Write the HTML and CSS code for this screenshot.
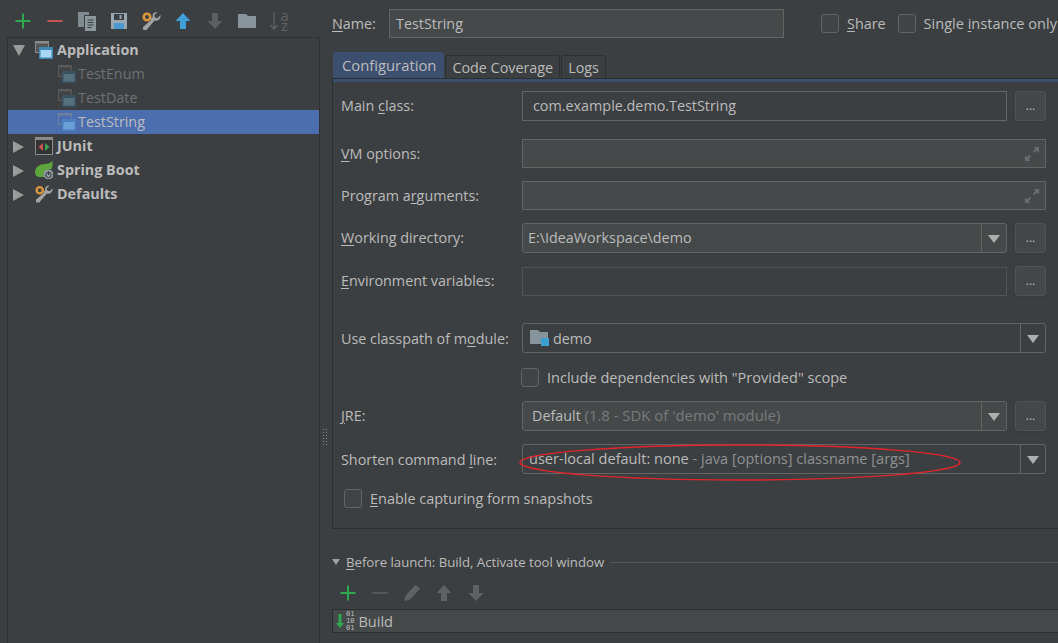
FILE: index.html
```html
<!DOCTYPE html>
<html lang="en">
<head>
<meta charset="utf-8">
<title>Run/Debug Configurations</title>
<link rel="stylesheet" href="styles.css">
</head>
<body>
<div class="app">
  <aside class="left">
    <div class="toolbar">
      <span class="tool"><svg width="18" height="18" viewBox="0 0 18 18"><path d="M9 1.500v15M1.500 9h15" stroke="#2fa84f" stroke-width="2"/></svg></span>
      <span class="tool"><svg width="18" height="18" viewBox="0 0 18 18"><path d="M1.500 9h15" stroke="#c75450" stroke-width="2"/></svg></span>
      <span class="tool"><svg width="18" height="20" viewBox="0 0 18 20"><path d="M0 1h11v3H6v12H0z" fill="#7f8b91"/><path d="M7 5h11v15H7z" fill="#8b979d"/><path d="M9.500 9h6M9.500 11.500h6M9.500 14h6M9.500 16.500h4" stroke="#3c3f41"/></svg></span>
      <span class="tool"><svg width="16" height="16" viewBox="0 0 16 16"><path d="M0 0h16v16H0z" fill="#9aa7b0"/><path d="M3 1h10v6H3z" fill="#3c3f41"/><path d="M8.500 2h2v4h-2z" fill="#9aa7b0"/><path d="M3 10h10v6H3z" fill="#4a9ad4"/></svg></span>
      <span class="tool"><svg width="19" height="19" viewBox="0 0 19 19"><use href="#wrench"/></svg></span>
      <span class="tool"><svg width="16" height="16" viewBox="0 0 16 16"><path d="M8 0l7.500 8H11v8H5V8H.5z" fill="#3f9fd8"/></svg></span>
      <span class="tool"><svg width="16" height="16" viewBox="0 0 16 16"><path d="M8 16L.5 8H5V0h6v8h4.500z" fill="#5c5f61"/></svg></span>
      <span class="tool"><svg width="18" height="14" viewBox="0 0 18 14"><path d="M0 0h8l2 2h8v12H0z" fill="#87949c"/></svg></span>
      <span class="tool sort"><svg width="8" height="18" viewBox="0 0 8 18"><path d="M4 0v17M.5 13L4 17l3.500-4" fill="none" stroke="#5f6264" stroke-width="1.200"/></svg><span class="sort-letters">a z</span></span>
    </div>
    <div class="tree">
      <div class="tree-row"><span class="arrow-down"></span><span class="node-icon"><svg width="18" height="18" viewBox="0 0 18 18"><use href="#win-bright"/></svg></span><b>Application</b></div>
      <div class="tree-row child dim"><span class="node-icon"><svg width="18" height="18" viewBox="0 0 18 18"><use href="#win-dim"/></svg></span>TestEnum</div>
      <div class="tree-row child dim"><span class="node-icon"><svg width="18" height="18" viewBox="0 0 18 18"><use href="#win-dim"/></svg></span>TestDate</div>
      <div class="tree-row child selected"><span class="node-icon"><svg width="18" height="18" viewBox="0 0 18 18"><use href="#win-sel"/></svg></span>TestString</div>
      <div class="tree-row"><span class="arrow-right"></span><span class="node-icon"><svg width="18" height="18" viewBox="0 0 18 18"><path d="M0 0h18v18H0z" fill="#8a8a8a"/><path d="M1 3h16v14H1z" fill="#333"/><path d="M8 6v8L3.500 10z" fill="#c75450"/><path d="M10 6v8l4.500-4z" fill="#3da356"/></svg></span><b>JUnit</b></div>
      <div class="tree-row"><span class="arrow-right"></span><span class="node-icon"><svg width="18" height="18" viewBox="0 0 18 18"><path d="M17.500 0c.5 4-.2 7-1.500 8.500a6 6 0 0 0-7 7.500H5C2 16 0 14 0 11c0-5 5-8 10-8 3 0 5.500-1 7.500-3z" fill="#5fa53d"/><circle cx="13.500" cy="13.500" r="5" fill="#8e9aa1"/><circle cx="13.500" cy="14" r="2.700" fill="none" stroke="#2f3234"/><path d="M13.500 10.500v3.500" stroke="#2f3234"/></svg></span><b>Spring Boot</b></div>
      <div class="tree-row"><span class="arrow-right"></span><span class="node-icon"><svg width="19" height="19" viewBox="0 0 19 19"><use href="#wrench"/></svg></span><b>Defaults</b></div>
    </div>
  </aside>

  <div class="splitter"><span class="grip"></span></div>

  <main class="right">
    <div class="name-row">
      <label class="name-label"><u>N</u>ame:</label>
      <div class="field filled name-field">TestString</div>
      <span class="check"></span><span class="check-text"><u>S</u>hare</span>
      <span class="check"></span><span class="check-text long">Single <u>i</u>nstance only</span>
    </div>

    <div class="tabs">
      <span class="tab active">Configuration</span>
      <span class="tab">Code Coverage</span>
      <span class="tab">Logs</span>
    </div>

    <section class="panel">
      <div class="row r-main"><label>Main <u>c</u>lass:</label><div class="field">com.example.demo.TestString</div><span class="more">...</span></div>
      <div class="row r-vm"><label><u>V</u>M options:</label><div class="field filled wide"><svg class="expand" width="16" height="16" viewBox="0 0 16 16"><use href="#expand"/></svg></div></div>
      <div class="row r-args"><label>Program a<u>r</u>guments:</label><div class="field filled wide"><svg class="expand" width="16" height="16" viewBox="0 0 16 16"><use href="#expand"/></svg></div></div>
      <div class="row r-dir"><label><u>W</u>orking directory:</label><div class="field filled combo"><span class="value">E:\IdeaWorkspace\demo</span><span class="drop"></span></div><span class="more">...</span></div>
      <div class="row r-env"><label><u>E</u>nvironment variables:</label><div class="field dim-border"></div><span class="more">...</span></div>
      <div class="row r-cp"><label>Use classpath of m<u>o</u>dule:</label><div class="field combo wide"><span class="value module"><svg width="19" height="18" viewBox="0 0 19 18"><path d="M0 1h8l2 2h8v12H0z" fill="#87949c"/><path d="M11 9h8v8h-8z" fill="#3b9fd1"/></svg>demo</span><span class="drop"></span></div></div>
      <div class="row r-inc"><span></span><div class="check-line"><span class="check"></span><span class="check-text long">Include dependencies with "Provided" scope</span></div></div>
      <div class="row r-jre"><label><u>J</u>RE:</label><div class="field filled combo"><span class="value jre">Default <span class="muted">(1.8 - SDK of 'demo' module)</span></span><span class="drop"></span></div><span class="more">...</span></div>
      <div class="row r-short"><label>Shorten command <u>l</u>ine:</label><div class="field combo wide"><span class="value short long">user-local default: none <span class="soft">- java [options] classname [args]</span></span><span class="drop"></span></div></div>
      <div class="check-line r-snap"><span class="check"></span><span class="check-text"><u>E</u>nable capturing form snapshots</span></div>
    </section>

    <div class="before-head"><span class="tri-small"></span><span class="before-title"><u>B</u>efore launch: Build, Activate tool window</span><span class="before-rule"></span></div>
    <div class="toolbar before-tools">
      <span class="tool"><svg width="18" height="18" viewBox="0 0 18 18"><path d="M9 1.500v15M1.500 9h15" stroke="#2fa84f" stroke-width="2"/></svg></span>
      <span class="tool"><svg width="18" height="18" viewBox="0 0 18 18"><path d="M1.500 9h15" stroke="#555" stroke-width="2"/></svg></span>
      <span class="tool"><svg width="16" height="16" viewBox="0 0 16 16"><path d="M11.500 0L16 3.500 6 14.500 0 16l2-6z" fill="#5f6264"/></svg></span>
      <span class="tool"><svg width="16" height="16" viewBox="0 0 16 16"><path d="M8 0l7.500 8H11v8H5V8H.5z" fill="#5f6264"/></svg></span>
      <span class="tool"><svg width="16" height="16" viewBox="0 0 16 16"><path d="M8 16L.5 8H5V0h6v8h4.500z" fill="#5f6264"/></svg></span>
    </div>
    <div class="build-list">
      <svg width="8" height="14" viewBox="0 0 8 14"><path d="M4 14L0 9h2.500V0h3v9H8z" fill="#2fa84f"/></svg>
      <span class="bits">01<br>10<br>01</span>
      <span class="build-text long">Build</span>
    </div>
  </main>

  <svg class="annotation" width="446" height="40" viewBox="0 0 446 40"><ellipse cx="221" cy="18.500" rx="220" ry="17.500" fill="none" stroke="#e0262c" stroke-width="1.500"/></svg>
</div>

<svg class="defs" width="0" height="0">
  <defs>
    <g id="win-bright"><path d="M0 0h14v12H0z" fill="#8a8a8a"/><path d="M1 2.500h12V11H1z" fill="#555"/><path d="M4 6h14v12H4z" fill="#3f87b5"/><path d="M5.500 9h11v7.500h-11z" fill="#a9d6f2"/></g>
    <g id="win-dim"><path d="M0 0h14v12H0z" fill="#5a5a5a"/><path d="M1 2.500h12V11H1z" fill="#444"/><path d="M4 6h14v12H4z" fill="#3a515f"/><path d="M5.500 9h11v7.500h-11z" fill="#55707f"/></g>
    <g id="win-sel"><path d="M0 0h14v12H0z" fill="#6f7f9f"/><path d="M1 2.500h12V11H1z" fill="#4b6eaf"/><path d="M4 6h14v12H4z" fill="#4c7fbf"/><path d="M5.500 9h11v7.500h-11z" fill="#6a9fd8"/></g>
    <g id="expand"><path d="M9.500 1H15v5.500l-2-2-2.500 2.500-1.500-1.500L11.500 3zM6.500 15H1V9.500l2 2L5.500 9 7 10.500 4.500 13z" fill="#6a6d6f"/></g>
    <g id="wrench"><path d="M18.500 3l-3 3.200-2.500-.8-.7-2.500L15.300.5c-3-.8-5.300 1.500-4.500 4.500l-1.600 1.600-.3 1.700L1 15l.2 3h3.200l8.200-9.500c3.300 1 6.500-1.500 5.900-5.500z" fill="#a3a3a3"/><circle cx="5" cy="5" r="3.300" fill="none" stroke="#d9963a" stroke-width="2.600"/></g>
  </defs>
</svg>
</body>
</html>
```

FILE: styles.css
```css
* { box-sizing: border-box; }
html, body { margin: 0; padding: 0; }
body {
  background: #3c3f41;
  color: #bbbbbb;
  font-family: "Open Sans", "Noto Sans", sans-serif;
  font-size: 14.35px;
  overflow: hidden;
}
u { text-underline-offset: 2px; }
.long { font-size: 14.55px; }
.defs { position: absolute; }
.app {
  position: relative;
  display: flex;
  width: 1058px;
  height: 643px;
  overflow: hidden;
}
.left {
  flex: 0 0 320px;
  display: flex;
  flex-direction: column;
  padding-left: 7px;
}
.toolbar { display: flex; align-items: center; }
.left .toolbar { height: 37px; padding-top: 5px; }
.tool {
  flex: 0 0 32px;
  display: flex;
  justify-content: center;
  align-items: center;
  height: 20px;
}
.sort { gap: 3px; }
.sort-letters {
  width: 8px;
  color: #5f6264;
  font-size: 14.5px;
  line-height: 10px;
  text-align: center;
}
.tree {
  flex: 1;
  border: 1px solid #2f3133;
  border-bottom: 0;
}
.tree-row {
  display: flex;
  align-items: center;
  height: 24px;
  padding-left: 27px;
  padding-bottom: 2px;
  position: relative;
  white-space: nowrap;
}
.tree-row b { color: #bbbbbb; font-weight: 700; margin-left: 4px; }
.tree-row .node-icon { margin-top: 2px; }
.tree-row.child { padding-left: 50px; }
.tree-row.child .node-icon { margin-right: 2px; }
.tree-row.dim { color: #6e7072; }
.tree-row.selected { background: #4b6eaf; color: #bbbbbb; }
.node-icon { display: flex; width: 18px; height: 18px; }
.arrow-down, .arrow-right { position: absolute; width: 0; height: 0; }
.arrow-down {
  left: 5px; top: 7px;
  border-left: 6px solid transparent;
  border-right: 6px solid transparent;
  border-top: 11px solid #9a9a9a;
}
.arrow-right {
  left: 5px; top: 7px;
  border-top: 6px solid transparent;
  border-bottom: 6px solid transparent;
  border-left: 11px solid #9a9a9a;
}
.splitter {
  flex: 0 0 12px;
  padding: 428px 0 0 2px;
}
.grip {
  display: block;
  width: 6px;
  height: 17px;
  background-image: radial-gradient(circle, #8a8c8e 0.7px, transparent 0.9px);
  background-size: 3px 3px;
}
.right {
  flex: 0 0 726px;
  padding-top: 9px;
  display: flex;
  flex-direction: column;
}
.name-row { display: flex; align-items: center; height: 29px; }
.name-label { width: 57px; }
.field {
  position: relative;
  border: 1px solid #646464;
  height: 30px;
  display: flex;
  align-items: center;
  padding-left: 10px;
  white-space: nowrap;
}
.field.filled { background: #45494a; }
.field.dim-border { border-color: #515457; }
.name-field { width: 395px; height: 29px; padding-left: 6px; margin-right: 37px; }
.check {
  flex: 0 0 18px;
  width: 18px;
  height: 19px;
  border: 1px solid #646464;
  border-radius: 3px;
  background: #414446;
}
.check-text { margin-left: 8px; white-space: nowrap; }
.name-row .check-text { margin-right: 12px; }
.name-row .long { padding-bottom: 2px; }
.tabs {
  display: flex;
  align-items: flex-end;
  height: 32px;
  margin-top: 8px;
  padding-left: 1px;
  gap: 1px;
}
.tab {
  height: 23px;
  padding: 0 6px;
  display: flex;
  align-items: center;
  border: 1px solid #2d2f31;
  border-bottom: 0;
  border-radius: 3px 3px 0 0;
  background: #3c3f41;
}
.tab.active {
  height: 26px;
  padding: 0 7px 2px 8px;
  font-size: 14.8px;
  background: #3d4f6f;
  border-color: #3d4f6f;
}
.panel {
  height: 451px;
  border-top: 1px solid #2d2f31;
  border-left: 1px solid #2d2f31;
  border-bottom: 1px solid #2d2f31;
  padding: 12px 0 0 8px;
  background: linear-gradient(#3d4f6f, #3d4f6f) no-repeat 0 0 / 100% 3px;
}
.row {
  display: grid;
  grid-template-columns: 181px 485px 39px;
  align-items: center;
  height: 30px;
}
.row label { grid-column: 1; }
.row .more { margin-left: 8px; }
.row .field { grid-column: 2; }
.row .field.wide { width: 524px; grid-column: 2 / 4; }
.more {
  grid-column: 3;
  width: 31px;
  height: 30px;
  border-radius: 3px;
  background: #45484a;
  border: 1px solid #505355;
  box-shadow: 0 2px 1px #393c3e;
  display: flex;
  justify-content: center;
  align-items: flex-end;
  padding-bottom: 9px;
  line-height: 10px;
  font-size: 12px;
  color: #bbbbbb;
}
.r-vm { margin-top: 18px; height: 29px; }
.r-vm .field, .r-args .field { height: 29px; }
.r-args { margin-top: 13px; height: 29px; }
.r-dir { margin-top: 13px; }
.r-env { margin-top: 13px; height: 29px; }
.r-env .field { height: 29px; }
.r-cp { margin-top: 28px; }
.r-inc { margin-top: 14px; height: 20px; }
.r-jre { margin-top: 14px; }
.r-short { margin-top: 13px; }
.r-snap { margin-top: 14px; }
.r-main label, .r-dir label, .r-env label, .r-jre label,
.r-main .field, .r-dir .value, .r-jre .value, .combo .value.short { padding-bottom: 2px; }
.expand { position: absolute; right: 5px; top: 6px; }
.combo { padding: 0; border-radius: 3px; }
.combo .value { flex: 1; padding-left: 5px; }
.combo .value.module { display: flex; align-items: center; gap: 4px; padding-left: 7px; }
.combo .value.short { padding-left: 6px; }
.combo .value.jre { padding-left: 9px; }
.muted { color: #787b7d; font-size: 14.9px; }
.soft { color: #8f9294; }
.drop {
  flex: 0 0 25px;
  height: 100%;
  border-left: 1px solid #646464;
  position: relative;
}
.drop::after {
  content: "";
  position: absolute;
  left: 6px;
  top: 11px;
  border-left: 6px solid transparent;
  border-right: 6px solid transparent;
  border-top: 8px solid #aeaeae;
}
.check-line { display: flex; align-items: center; height: 20px; }
.r-inc .check-line { grid-column: 2 / 4; margin-left: -1px; }
.r-snap { margin-left: 3px; font-size: 14.45px; }
.before-head {
  display: flex;
  align-items: center;
  height: 20px;
  margin-top: 23px;
}
.tri-small {
  width: 0; height: 0;
  border-left: 4px solid transparent;
  border-right: 4px solid transparent;
  border-top: 6px solid #a0a0a0;
  margin: 0 6px 0 0;
}
.before-title { font-size: 13.2px; white-space: nowrap; }
.before-rule { flex: 1; height: 1px; background: #555859; margin-left: 6px; }
.before-tools { height: 20px; margin-top: 11px; }
.build-list {
  margin-top: 6px;
  height: 24px;
  border: 1px solid #2d2f31;
  border-right: 0;
  background: #45494a;
  display: flex;
  align-items: center;
  padding-left: 3px;
}
.bits {
  font-family: "DejaVu Sans Mono", monospace;
  font-size: 7px;
  line-height: 7px;
  color: #bbbbbb;
  margin-left: 2px;
}
.build-text { margin-left: 4px; }
.annotation { position: absolute; left: 519px; top: 444px; pointer-events: none; }
```
